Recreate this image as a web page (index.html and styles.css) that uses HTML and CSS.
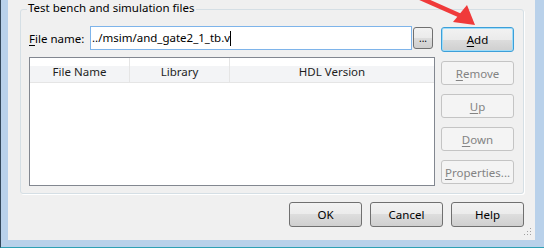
FILE: index.html
```html
<!DOCTYPE html>
<html>
<head>
<meta charset="utf-8">
<title>Test bench and simulation files</title>
<link rel="stylesheet" href="styles.css">
</head>
<body>
<!--对话框窗口-->
<div class="window">
    <div class="client">
        <!--文件分组-->
        <fieldset class="group">
            <legend>Test bench and simulation files</legend>
            <div class="group-body">
                <div class="left">
                    <div class="file-row">
                        <label class="label"><u>F</u>ile name:</label>
                        <div class="input">../msim/and_gate2_1_tb.v<span class="caret"></span></div>
                        <button class="btn browse">...</button>
                    </div>
                    <div class="table">
                        <div class="thead">
                            <div class="th c1">File Name</div>
                            <div class="th c2">Library</div>
                            <div class="th c3">HDL Version</div>
                        </div>
                    </div>
                </div>
                <div class="right">
                    <button class="btn focus"><u>A</u>dd</button>
                    <button class="btn off"><u>R</u>emove</button>
                    <button class="btn off"><u>U</u>p</button>
                    <button class="btn off"><u>D</u>own</button>
                    <button class="btn off"><u>P</u>roperties...</button>
                </div>
            </div>
        </fieldset>
        <!--底部按钮-->
        <div class="footer">
            <button class="btn">OK</button>
            <button class="btn">Cancel</button>
            <button class="btn">Help</button>
        </div>
        <svg class="grip" width="8" height="8" viewBox="0 0 8 8">
            <rect x="6" y="0" width="1" height="1" fill="#a0a0a0"/>
            <rect x="3" y="3" width="1" height="1" fill="#a0a0a0"/>
            <rect x="6" y="3" width="1" height="1" fill="#a0a0a0"/>
            <rect x="0" y="6" width="1" height="1" fill="#a0a0a0"/>
            <rect x="3" y="6" width="1" height="1" fill="#a0a0a0"/>
            <rect x="6" y="6" width="1" height="1" fill="#a0a0a0"/>
        </svg>
    </div>
    <!--红色箭头标注-->
    <svg class="arrow" width="544" height="248" viewBox="0 0 544 248">
        <line x1="417" y1="-3" x2="460" y2="16" stroke="#f03a3a" stroke-width="4.5"/>
        <polygon points="474,25 452,22 466,5" fill="#f03a3a"/>
    </svg>
</div>
</body>
</html>
```

FILE: styles.css
```css
/*清除默认样式*/
body,div,fieldset,legend{padding:0; margin:0;}
body{background:#fff; font:11.5px "Noto Sans","Open Sans",sans-serif; color:#000;}
u{text-decoration:underline; text-underline-offset:2px;}
/*窗口*/
.window{width:544px; height:248px; box-sizing:border-box; position:relative; background:#b9d1ea; border-left:1px solid #33475a; border-bottom:1px solid #2fa0b4; padding:0 9px 8px 7px;}
.client{height:240px; background:#f0f0f0; position:relative; overflow:hidden;}
/*分组框*/
.group{margin:1px 11px 0 12px; border:1px solid #d5dfe5; border-radius:3px; box-shadow:1px 1px 0 #fff; padding:9px 9px 7px 8px; min-width:0;}
.group legend{margin-left:-2px; padding:0 2px 2px 1px; line-height:14px; color:#000;}
.group-body{display:flex; gap:6px;}
.left{width:406px;}
.right{width:73px; display:flex; flex-direction:column; gap:9px; padding-top:1px;}
/*文件名行*/
.file-row{display:flex; align-items:center; height:24px; margin-bottom:7px;}
.label{width:61px;}
.input{width:322px; height:24px; box-sizing:border-box; border:1px solid #7eb4ea; background:#fff; padding-left:1px; line-height:22px; display:flex; align-items:center; white-space:nowrap;}
.caret{display:inline-block; width:1px; height:15px; background:#000;}
.btn.browse{width:20px; height:22px; margin-left:1px; font-size:10px; line-height:18px;}
/*列表*/
.table{height:129px; box-sizing:border-box; border:1px solid #828790; background:#fff;}
.thead{display:flex; height:25px; border-bottom:1px solid #e5e5e5; box-sizing:border-box; background:linear-gradient(#fff 0,#fff 35%,#f3f4f6 35%,#f3f4f6 100%);}
.th{line-height:21px; padding-top:3px; text-align:center; color:#1e1e1e; box-sizing:border-box;}
.c1{width:100px; border-right:1px solid #e5e5e5;}
.c2{width:100px; border-right:1px solid #e5e5e5;}
.c3{flex:1;}
/*按钮*/
.btn{width:73px; height:24px; box-sizing:border-box; border:1px solid #707070; border-radius:3px; background:linear-gradient(#f2f2f2 0,#ebebeb 50%,#dddddd 50%,#cfcfcf 100%); font:11.5px "Noto Sans","Open Sans",sans-serif; color:#000; padding:0;}
.btn.focus{border-color:#3c9fd9; box-shadow:inset 0 0 0 1px #9fdcf8; height:25px;}
.btn.off{border-color:#c4c4c4; background:#f4f4f4; color:#838383;}
/*底部*/
.footer{display:flex; justify-content:flex-end; gap:8px; margin:8px 11px 0 0;}
.footer .btn{height:25px;}
.grip{position:absolute; right:3px; bottom:4px;}
.arrow{position:absolute; left:0; top:0; pointer-events:none;}
```
